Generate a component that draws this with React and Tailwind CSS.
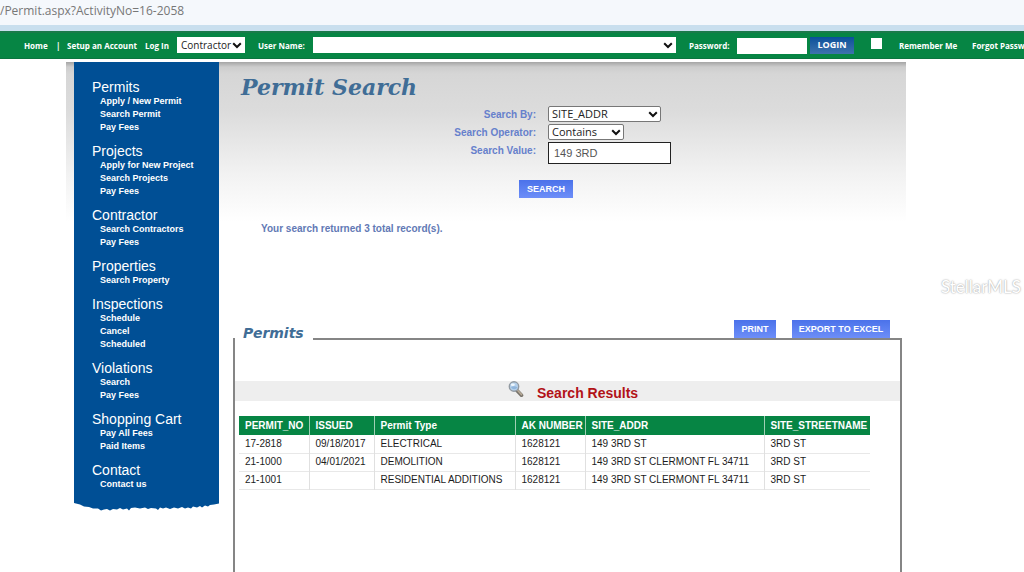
import React from 'react';

const menu = [
  { title: 'Permits', items: ['Apply / New Permit', 'Search Permit', 'Pay Fees'] },
  { title: 'Projects', items: ['Apply for New Project', 'Search Projects', 'Pay Fees'] },
  { title: 'Contractor', items: ['Search Contractors', 'Pay Fees'] },
  { title: 'Properties', items: ['Search Property'] },
  { title: 'Inspections', items: ['Schedule', 'Cancel', 'Scheduled'] },
  { title: 'Violations', items: ['Search', 'Pay Fees'] },
  { title: 'Shopping Cart', items: ['Pay All Fees', 'Paid Items'] },
  { title: 'Contact', items: ['Contact us'] },
];

const columns = [
  { name: 'PERMIT_NO', width: 'w-[70px]' },
  { name: 'ISSUED', width: 'w-[65px]' },
  { name: 'Permit Type', width: 'w-[141px]' },
  { name: 'AK NUMBER', width: 'w-[70px]' },
  { name: 'SITE_ADDR', width: 'w-[179px]' },
  { name: 'SITE_STREETNAME', width: 'w-[106px]' },
];

const rows = [
  ['17-2818', '09/18/2017', 'ELECTRICAL', '1628121', '149 3RD ST', '3RD ST'],
  ['21-1000', '04/01/2021', 'DEMOLITION', '1628121', '149 3RD ST CLERMONT FL 34711', '3RD ST'],
  ['21-1001', '', 'RESIDENTIAL ADDITIONS', '1628121', '149 3RD ST CLERMONT FL 34711', '3RD ST'],
];

function Select({ id, label, options, className, selectClass }) {
  return (
    <div className={`relative shrink-0 font-normal ${className}`}>
      <select
        id={id}
        aria-label={label}
        className={`block h-4 w-full appearance-none bg-white font-['Open_Sans',sans-serif] font-normal leading-[14px] text-[#222] ${selectClass}`}
      >
        {options.map((o) => (
          <option key={o}>{o}</option>
        ))}
      </select>
      <svg viewBox="0 0 10 7" className="pointer-events-none absolute right-[3px] top-[5px] h-[7px] w-[10px]">
        <path d="M1.200 1.200 5 5 8.800 1.200" fill="none" stroke="#111" strokeWidth="2" />
      </svg>
    </div>
  );
}

function TopBar() {
  return (
    <form
      onSubmit={(e) => e.preventDefault()}
      className="flex h-7 items-center overflow-hidden whitespace-nowrap border-b border-t-2 border-b-[#0a7540] border-t-[#1a7a4a] bg-[#068544] pl-6 font-['Open_Sans',sans-serif] text-[8px] font-bold text-white"
    >
      <a href="#home" className="w-8 shrink-0">Home</a>
      <span className="w-[11px] shrink-0">|</span>
      <a href="#setup" className="w-[78px] shrink-0">Setup an Account</a>
      <a href="#login" className="w-8 shrink-0">Log In</a>
      <Select id="role" label="Account type" options={['Contractor', 'Citizen']} className="mb-px w-[68px]" selectClass="pl-1 pr-3 text-[10px]" />
      <label htmlFor="user" className="ml-[13px] w-[55px] shrink-0">User Name:</label>
      <Select id="user" options={['']} className="mb-px w-[363px]" selectClass="pl-1 pr-4 text-[10px]" />
      <label htmlFor="password" className="ml-[13px] w-12 shrink-0">Password:</label>
      <input id="password" type="password" className="h-4 w-[70px] shrink-0 bg-white px-1 text-black" />
      <button type="submit" className="mb-px ml-[3px] h-[17px] w-11 shrink-0 bg-linear-to-b from-[#07509a] to-[#3d73ad] text-[9px] font-bold">
        LOGIN
      </button>
      <input id="remember" type="checkbox" className="mb-1 ml-[17px] size-[11px] shrink-0 appearance-none bg-white" />
      <label htmlFor="remember" className="ml-[17px] w-[73px] shrink-0">Remember Me</label>
      <a href="#forgot" className="shrink-0">Forgot Password</a>
    </form>
  );
}

function Sidebar() {
  return (
    <aside className="w-[145px] shrink-0 text-white">
      <nav className="flex flex-col gap-[10px] bg-[#004f95] pb-3 pl-[18px] pt-[18px]">
        {menu.map((group) => (
          <div key={group.title}>
            <h2 className="text-[14px] leading-[15px]">{group.title}</h2>
            <ul className="pl-2 text-[9px] font-bold leading-[13px]">
              {group.items.map((item) => (
                <li key={item}>
                  <a href="#menu">{item}</a>
                </li>
              ))}
            </ul>
          </div>
        ))}
      </nav>
      <svg viewBox="0 0 145 8" preserveAspectRatio="none" className="block h-2 w-full">
        <path
          d="M0 0H145V0.500L140 1.500 136 2 134 3.500 131 2.500 128 4.500 126 3 123 4.500 119 3.500 117 5.500 114 4.500 111 5.500 108 4 104 5.500 100 4.500 96 6 92 4.500 89 5.500 86 4.500 84 7 82 5.500 77 5 74 6 71 4.500 66 5.500 61 4.500 57 5 55 7.500 53 5.500 49 6.500 46 5 43 6.500 39 6 36 7.500 33 6 30 6.500 27 7.500 24 5.500 19 5.500 15 4 10 3.500 6 1.500 0 0Z"
          fill="#004f95"
        />
      </svg>
    </aside>
  );
}

const blueButton =
  "h-[18px] bg-linear-to-b from-[#4b72ea] to-[#6d8ef8] text-[9px] leading-[18px] font-bold text-white font-['Liberation_Sans',Arial,sans-serif]";

function SearchForm() {
  return (
    <form onSubmit={(e) => e.preventDefault()} className="flex flex-col">
      <div className="grid grid-cols-[317px_1fr] gap-x-3 text-[10px] font-bold leading-[18px] text-[#6680cc]">
        <label htmlFor="by" className="text-right">Search By:</label>
        <Select id="by" options={['SITE_ADDR', 'PERMIT_NO']} className="w-[113px]" selectClass="rounded-[2px] border border-[#777] pl-[3px] pr-4 text-[11px]" />
        <label htmlFor="op" className="text-right">Search Operator:</label>
        <Select id="op" options={['Contains', 'Equals']} className="w-[76px]" selectClass="rounded-[2px] border border-[#777] pl-[3px] pr-4 text-[11px]" />
        <label htmlFor="value" className="text-right">Search Value:</label>
        <input
          id="value"
          type="text"
          defaultValue="149 3RD"
          className="h-[22px] w-[123px] border border-[#222] bg-white px-[5px] text-[11px] font-normal text-[#555]"
        />
      </div>
      <button type="submit" className={`ml-[300px] mt-4 w-[54px] ${blueButton}`}>SEARCH</button>
    </form>
  );
}

function Magnifier() {
  return (
    <svg viewBox="0 0 16 16" className="size-4">
      <path d="M8.500 9 13.500 14.300" stroke="#77726a" strokeWidth="3.600" strokeLinecap="round" />
      <path d="M9.500 9.300 13.600 13.600" stroke="#b8ab98" strokeWidth="1.600" strokeLinecap="round" />
      <circle cx="6" cy="5.500" r="4.700" fill="#b4d0ec" stroke="#929aa2" strokeWidth="1.400" />
      <path d="M3 6.200Q6 4.500 9.400 6.200A3.600 3.600 0 0 1 3 6.200Z" fill="#8fb5dc" />
      <ellipse cx="4.800" cy="3.800" rx="2" ry="1.300" fill="#eef6fd" />
    </svg>
  );
}

function Results() {
  return (
    <section className="ml-[14px] mr-1 flex flex-1 flex-col">
      <div className="flex h-5 items-end">
        <span className="h-[2px] w-[2px] bg-[#858585]" />
        <h2 className="w-[78px] pl-2 font-['DejaVu_Sans',Verdana,sans-serif] text-[14px] font-bold italic leading-[14px] text-[#406d96]">
          Permits
        </h2>
        <div className="flex flex-1 justify-end gap-4 border-b-2 border-[#858585] pr-3">
          <button type="button" className={`w-[42px] ${blueButton}`}>PRINT</button>
          <button type="button" className={`w-[98px] ${blueButton}`}>EXPORT TO EXCEL</button>
        </div>
      </div>
      <div className="flex-1 border-x-2 border-[#858585] pt-[41px]">
        <div className="flex h-5 items-start bg-[#eeeeee] pl-[273px]">
          <Magnifier />
          <h3 className="ml-[13px] text-[14px] font-bold leading-6 text-[#b21217]">Search Results</h3>
        </div>
        <table className="ml-1 mt-[15px] table-fixed border-collapse text-[10px] text-[#1c1c1c]">
          <thead>
            <tr className="h-[19px] bg-[#068544] text-left text-white">
              {columns.map((c) => (
                <th key={c.name} className={`whitespace-nowrap border-r border-[#9fcfb4] p-0 pl-[6px] font-bold leading-4 last:border-r-0 ${c.width}`}>
                  {c.name}
                </th>
              ))}
            </tr>
          </thead>
          <tbody>
            {rows.map((r) => (
              <tr key={r[0]} className="h-[18px] border-b border-[#e8e8e8]">
                {r.map((cell, i) => (
                  <td key={i} className="whitespace-nowrap border-r border-[#e0e0e0] p-0 pl-[6px] leading-4 last:border-r-0">
                    {cell}
                  </td>
                ))}
              </tr>
            ))}
          </tbody>
        </table>
      </div>
    </section>
  );
}

export default function App() {
  return (
    <div className="relative flex min-h-screen flex-col overflow-hidden bg-white font-['Liberation_Sans',Arial,sans-serif]">
      <div className="h-[25px] bg-[#f5f8fc] font-['Open_Sans',sans-serif] text-[12px] leading-[22px] text-[#777]">
        /Permit.aspx?ActivityNo=16-2058
      </div>
      <div className="h-[6px] bg-[#c9dfee]" />
      <TopBar />
      <div className="ml-[66px] mt-[3px] flex max-w-[840px] flex-1 items-stretch bg-[linear-gradient(to_bottom,#a5a5a5_0px,#cdcdcd_5px,#d6d6d6_12px,#dcdcdc_50px,#f2f2f2_112px,#ffffff_160px)] pl-2">
        <Sidebar />
        <main className="flex min-w-0 flex-1 flex-col">
          <h1 className="pb-[5px] pl-[22px] pt-[11px] font-['DejaVu_Serif',Georgia,serif] text-[22px] font-bold italic leading-7 text-[#406d96]">
            Permit Search
          </h1>
          <SearchForm />
          <p className="mb-[83px] mt-[23px] pl-[42px] text-[10px] font-bold leading-4 text-[#6279b5]">
            Your search returned 3 total record(s).
          </p>
          <Results />
        </main>
      </div>
      <div className="pointer-events-none absolute right-[3px] top-[275px] font-['Lato',sans-serif] text-[17px] leading-6 text-white [text-shadow:0_0_2px_#aaa,0_0_1px_#bbb]">
        StellarMLS
      </div>
    </div>
  );
}
